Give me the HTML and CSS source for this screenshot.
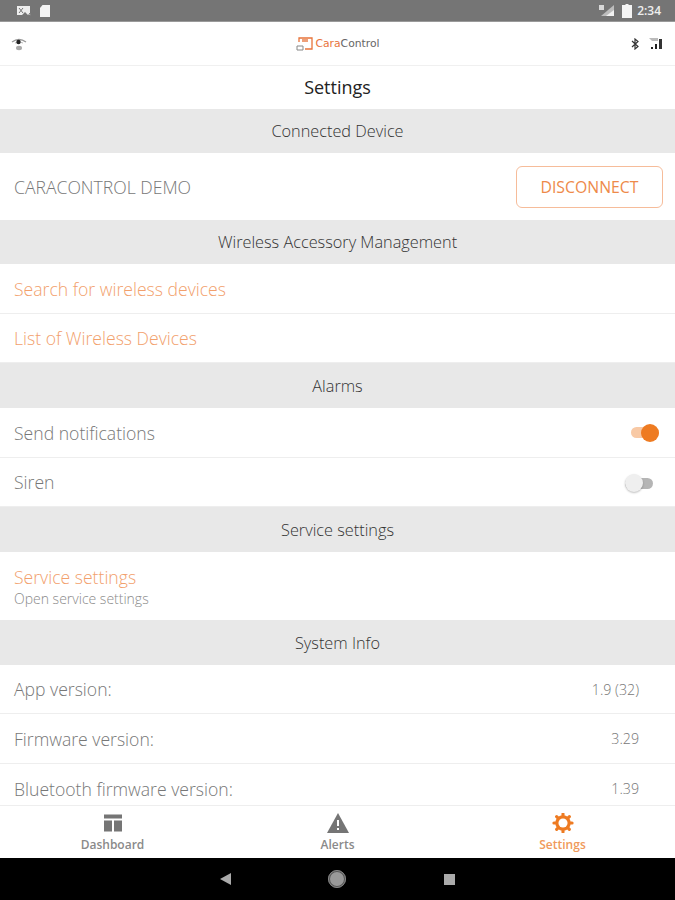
FILE: index.html
```html
<!DOCTYPE html>
<html lang="en">
<head>
  <meta charset="UTF-8" />
  <title>Settings</title>
  <link rel="stylesheet" href="styles.css">
</head>
<body>
  <div class="status-bar">
    <div class="status-group">
      <svg class="status-icon" width="16" height="12" viewBox="0 0 16 12"><path d="M1 1h13v9h-2L9 7 6 10H1z" fill="#eee"/><path d="M3 3l4 5M7 3L3 8M14 8l1 2-3 1z" stroke="#757575" stroke-width="1" fill="#eee"/></svg>
      <svg class="status-icon" width="12" height="14" viewBox="0 0 12 14"><path d="M3.500 1H11v12H1V4z" fill="#f4f4f4"/></svg>
    </div>
    <div class="status-group">
      <svg class="status-icon" width="17" height="13" viewBox="0 0 17 13"><path d="M16 1v11H3z" fill="#bdbdbd"/><path d="M16 6v6H8z" fill="#f2f2f2"/><rect x="1" y="1" width="5" height="5" fill="#d8d8d8"/></svg>
      <svg class="status-icon" width="10" height="14" viewBox="0 0 10 14"><path d="M3.500 0h3v1H10v13H0V1h3.500z" fill="#f4f4f4"/></svg>
      <span class="clock">2:34</span>
    </div>
  </div>

  <header class="app-bar">
    <svg width="16" height="14" viewBox="0 0 16 14"><path d="M1 5q7-5 14 0" fill="none" stroke="#999" stroke-width="1.300"/><path d="M4 6q4-2.500 8 0" fill="none" stroke="#bbb" stroke-width="1"/><circle cx="7.500" cy="5" r="2.200" fill="#222"/><ellipse cx="8" cy="11" rx="3" ry="2.200" fill="#aaa"/></svg>
    <div class="logo">
      <svg width="17" height="14" viewBox="0 0 17 14"><path d="M3 5V1h13v11H9" fill="none" stroke="#e8743b" stroke-width="1.300"/><rect x="6" y="2" width="6" height="3" fill="#eda07a"/><path d="M1 9h6v4H1z" fill="none" stroke="#888"/></svg>
      <span class="logo-text"><span class="logo-cara">Cara</span>Control</span>
    </div>
    <div class="app-bar-right">
      <svg width="8" height="12" viewBox="0 0 8 12"><path d="M1 3l6 5.500L4 11V1l3 2.500L1 9" fill="none" stroke="#333" stroke-width="1.200"/></svg>
      <svg width="15" height="13" viewBox="0 0 15 13"><path d="M1 1h9v3H4z" fill="#bbb"/><path d="M3 12h2v-2H3zM7 12h2V7H7z" fill="#222"/><path d="M11 12h3V2h-3z" fill="#333"/></svg>
    </div>
  </header>

  <h1 class="page-title">Settings</h1>

  <main class="settings">
    <h2 class="section section-first">Connected Device</h2>
    <div class="row row-device">
      <span class="row-label">CARACONTROL DEMO</span>
      <button class="disconnect">DISCONNECT</button>
    </div>

    <h2 class="section section-first">Wireless Accessory Management</h2>
    <div class="row"><span class="row-link">Search for wireless devices</span></div>
    <div class="row row-tall"><span class="row-link">List of Wireless Devices</span></div>

    <h2 class="section">Alarms</h2>
    <div class="row">
      <span class="row-label">Send notifications</span>
      <span class="toggle toggle-on"></span>
    </div>
    <div class="row row-tall">
      <span class="row-label">Siren</span>
      <span class="toggle toggle-off"></span>
    </div>

    <h2 class="section">Service settings</h2>
    <div class="row row-double">
      <span class="row-link">Service settings</span>
      <span class="row-sub">Open service settings</span>
    </div>

    <h2 class="section">System Info</h2>
    <div class="row row-tall">
      <span class="row-label">App version:</span>
      <span class="row-value">1.9 (32)</span>
    </div>
    <div class="row">
      <span class="row-label">Firmware version:</span>
      <span class="row-value">3.29</span>
    </div>
    <div class="row">
      <span class="row-label">Bluetooth firmware version:</span>
      <span class="row-value">1.39</span>
    </div>
  </main>

  <nav class="tabs">
    <div class="tab">
      <svg width="20" height="19" viewBox="0 0 20 19"><path d="M1 1h18v4H1zM1 7h8v11H1zM11 7h8v11h-8z" fill="#757575"/></svg>
      <span>Dashboard</span>
    </div>
    <div class="tab">
      <svg width="22" height="20" viewBox="0 0 22 20"><path d="M11 0l11 20H0z" fill="#757575"/><path d="M10 7h2v6h-2zM10 15h2v2h-2z" fill="#fff"/></svg>
      <span>Alerts</span>
    </div>
    <div class="tab tab-active">
      <svg width="22" height="22" viewBox="0 0 22 22"><circle cx="11" cy="11" r="6.500" fill="none" stroke="#ee7b22" stroke-width="4"/><path d="M11 1v20M1 11h20M4 4l14 14M18 4L4 18" stroke="#ee7b22" stroke-width="3.400" stroke-linecap="round"/><circle cx="11" cy="11" r="5" fill="#fff"/></svg>
      <span>Settings</span>
    </div>
  </nav>

  <footer class="nav-bar">
    <span class="nav-back"></span>
    <span class="nav-home"></span>
    <span class="nav-recent"></span>
  </footer>
</body>
</html>
```

FILE: styles.css
```css
* {
  box-sizing: border-box;
}

html, body {
  height: 100%;
}

body {
  margin: 0;
  display: flex;
  flex-direction: column;
  height: 900px;
  overflow: hidden;
  font-family: "Open Sans", "Noto Sans", sans-serif;
  background: #fff;
  color: #555;
}

.status-bar {
  height: 22px;
  flex: none;
  background: #757575;
  border-bottom: 1px solid #9a9a9a;
  display: flex;
  justify-content: space-between;
  align-items: center;
  padding: 0 14px 0 16px;
}

.status-group {
  display: flex;
  align-items: center;
  gap: 7px;
}

.clock {
  font-size: 12px;
  font-weight: 600;
  color: #eee;
  margin-left: -2px;
}

.app-bar {
  height: 44px;
  flex: none;
  display: flex;
  align-items: center;
  justify-content: space-between;
  padding: 0 12px 0 11px;
  border-bottom: 1px solid #f0f0f0;
}

.app-bar-right {
  display: flex;
  align-items: center;
  gap: 9px;
}

.logo {
  display: flex;
  align-items: center;
  gap: 2px;
  margin-left: 18px;
}

.logo-text {
  font-family: "DejaVu Sans", sans-serif;
  font-size: 10.800px;
  color: #666;
}

.logo-cara {
  color: #e8743b;
}

.page-title {
  margin: 0;
  height: 43px;
  flex: none;
  display: flex;
  align-items: center;
  justify-content: center;
  padding-bottom: 1px;
  font-size: 18px;
  font-weight: 400;
  color: #222;
}

.settings {
  flex: 1;
  min-height: 0;
  overflow: hidden;
}

.section {
  margin: 0;
  height: 45px;
  display: flex;
  align-items: center;
  justify-content: center;
  background: #e8e8e8;
  font-size: 16.300px;
  font-weight: 300;
  color: #333;
}

.section-first {
  height: 44px;
}

.row {
  height: 50px;
  display: flex;
  align-items: center;
  justify-content: space-between;
  padding: 0 36px 0 14px;
  background: #fff;
  border-bottom: 1px solid #eee;
  flex: none;
}

.row-tall {
  height: 49px;
}

.row-device {
  height: 67px;
  padding-right: 12px;
  border-bottom: 0;
}

.row-double {
  height: 68px;
  flex-direction: column;
  align-items: flex-start;
  justify-content: center;
  border-bottom: 0;
}

.row-label {
  font-size: 17.600px;
  font-weight: 300;
  color: #777;
}

.row-link {
  font-size: 17.600px;
  font-weight: 300;
  color: #f2a06c;
  line-height: 24px;
}

.row-sub {
  font-size: 14px;
  font-weight: 300;
  color: #8a8a8a;
  line-height: 19px;
}

.row-value {
  font-size: 14.200px;
  font-weight: 300;
  color: #777;
}

.disconnect {
  width: 147px;
  height: 42px;
  padding: 0;
  background: #fff;
  border: 1px solid #f6bc9a;
  border-radius: 6px;
  font-family: inherit;
  font-size: 15.800px;
  font-weight: 400;
  color: #ee8a4a;
}

.toggle {
  position: relative;
  width: 28px;
  height: 11px;
  border-radius: 6px;
}

.toggle::after {
  content: "";
  position: absolute;
  top: -3.500px;
  width: 18px;
  height: 18px;
  border-radius: 50%;
}

.toggle-on {
  background: #f8c9a5;
  margin-right: -20px;
}

.toggle-on::after {
  right: 0;
  background: #ee7b22;
}

.toggle-off {
  background: #b5b5b5;
  margin-right: -14px;
  top: 1px;
}

.toggle-off::after {
  left: 0;
  background: #efefef;
  box-shadow: 0 1px 2px rgba(0, 0, 0, 0.25);
}

.tabs {
  height: 53px;
  flex: none;
  display: grid;
  grid-template-columns: repeat(3, 1fr);
  border-top: 1px solid #eee;
  background: #fff;
}

.tab {
  display: flex;
  flex-direction: column;
  align-items: center;
  justify-content: flex-start;
  padding-top: 7px;
  font-size: 12px;
  font-weight: 600;
  line-height: 15px;
  color: #8a8a8a;
}

.tab svg {
  height: 20px;
  margin-bottom: 4px;
}

.tab-active {
  color: #f09a5a;
}

.nav-bar {
  height: 42px;
  flex: none;
  background: #000;
  display: grid;
  grid-template-columns: 1fr 1fr 1fr;
  align-items: center;
  justify-items: center;
  padding: 0 169px;
}

.nav-back {
  width: 0;
  height: 0;
  border-style: solid;
  border-width: 6px 11px 6px 0;
  border-color: transparent #aaa transparent transparent;
}

.nav-home {
  width: 18px;
  height: 18px;
  border-radius: 50%;
  background: #999;
  border: 2px solid #555;
  outline: 1px solid #888;
  outline-offset: -1px;
}

.nav-recent {
  width: 11px;
  height: 11px;
  background: #aaa;
}
```
